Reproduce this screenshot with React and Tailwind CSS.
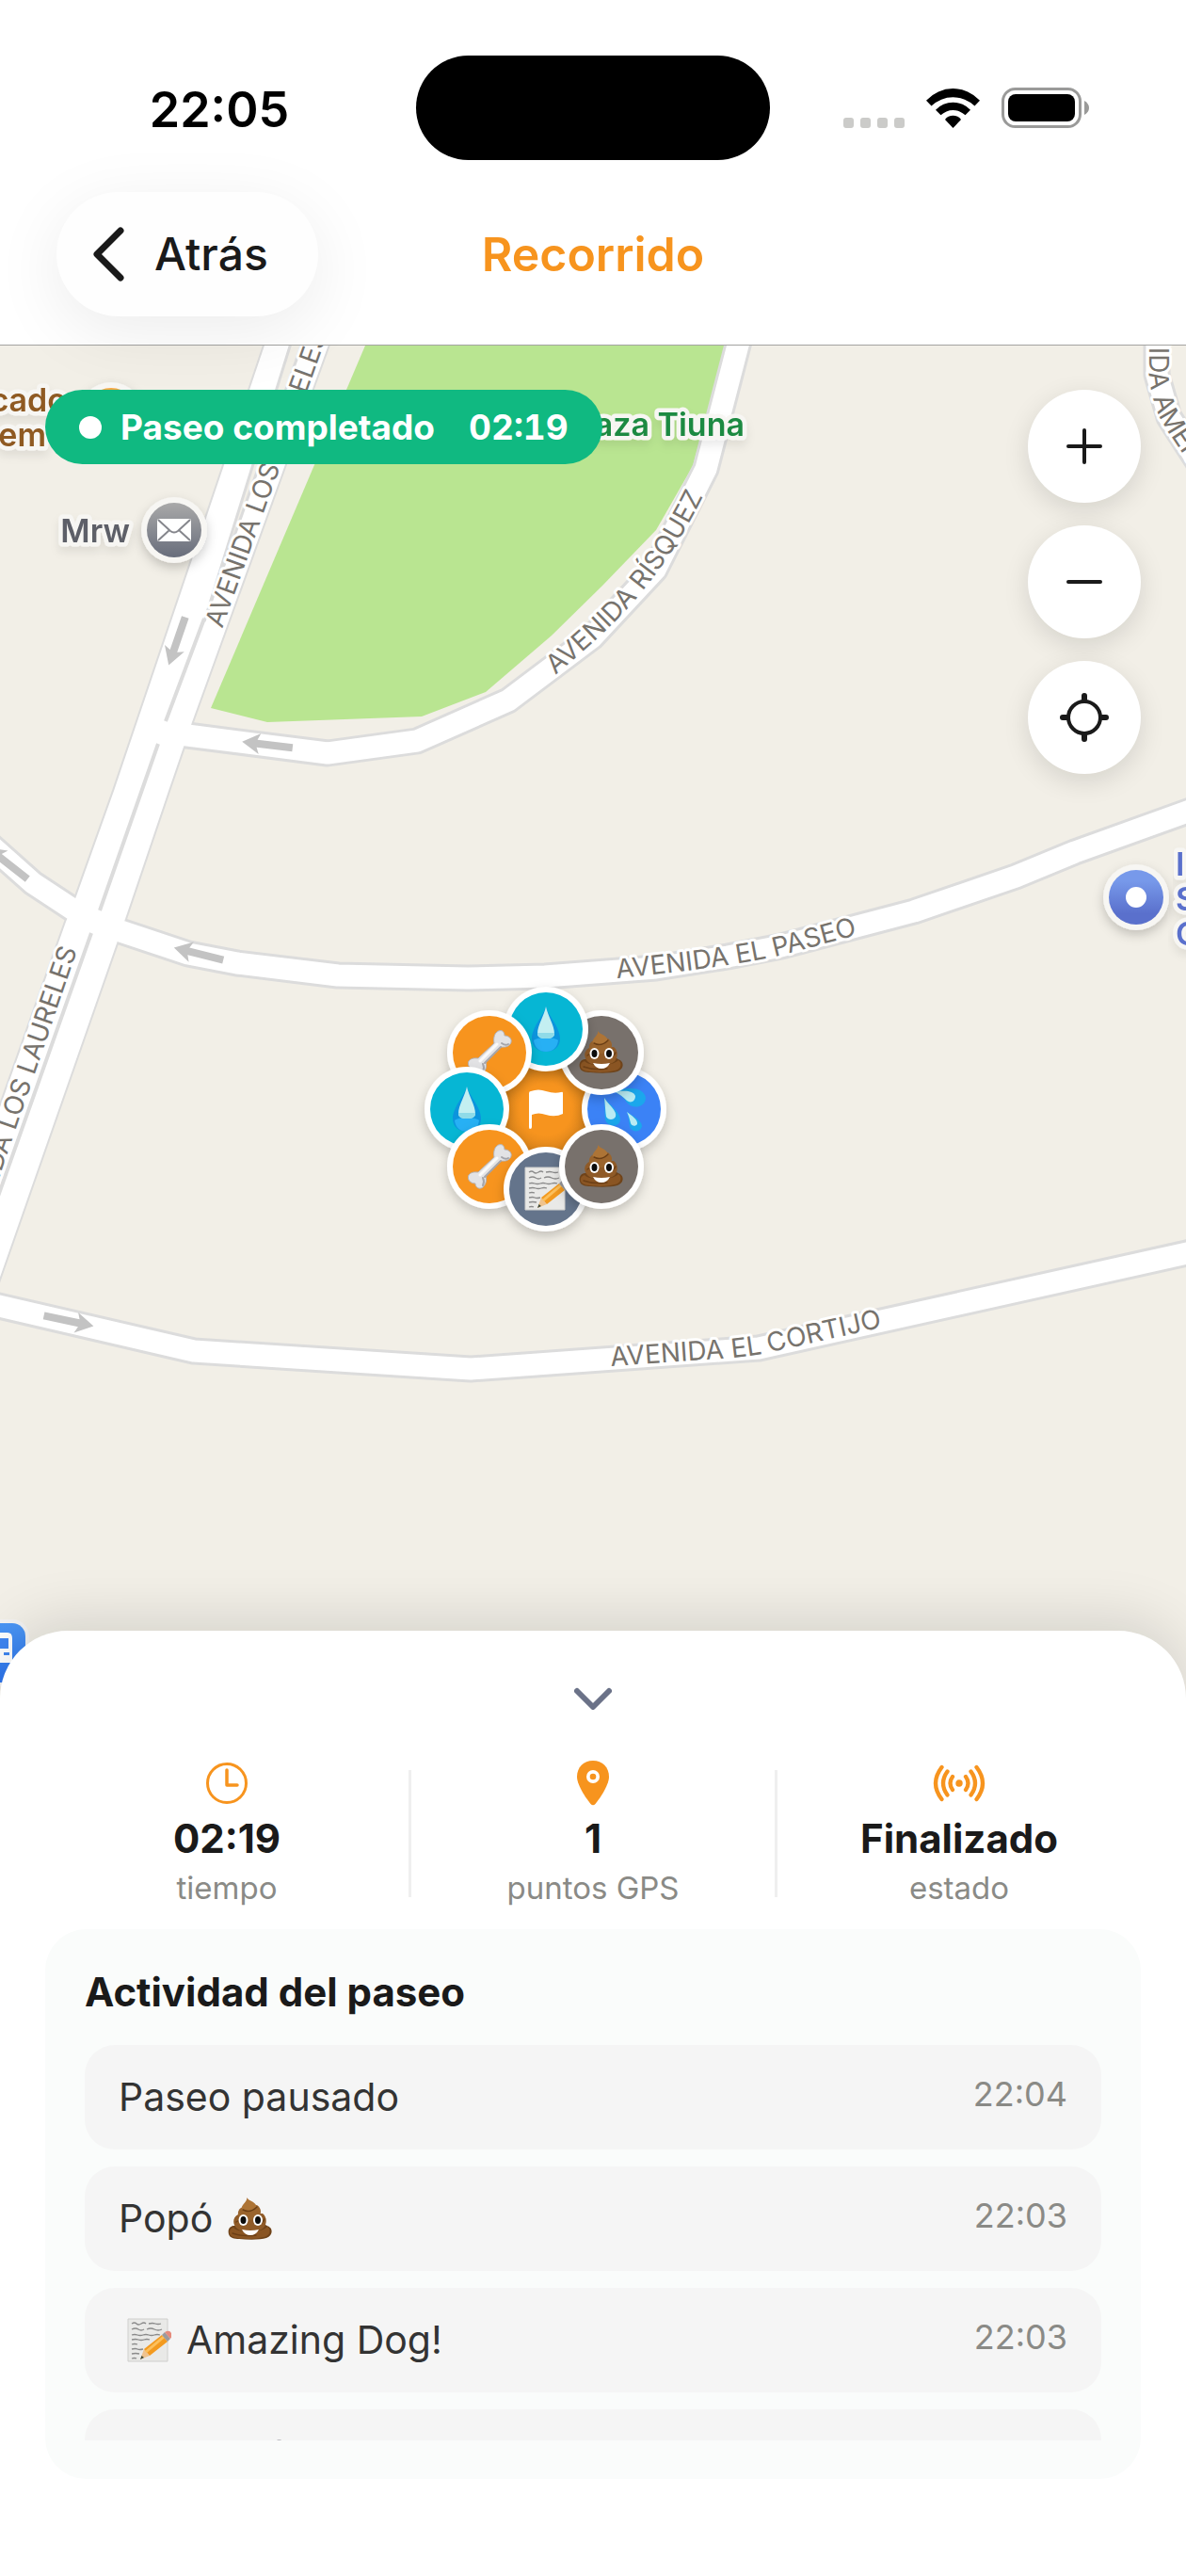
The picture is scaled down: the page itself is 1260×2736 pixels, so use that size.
import React from "react";

const STATS = [
  { icon: "clock", value: "02:19", label: "tiempo" },
  { icon: "pin", value: "1", label: "puntos GPS" },
  { icon: "radio", value: "Finalizado", label: "estado" },
];

const EVENTS = [
  { id: 1, text: "Paseo pausado", time: "22:04" },
  { id: 2, text: "Popó", after: "poop", time: "22:03" },
  { id: 3, text: "Amazing Dog!", before: "memo", time: "22:03" },
  { id: 4, text: "Snack", after: "bone", time: "22:03" },
];

const MARKERS = [
  { x: 663, y: 1178, color: "#3b82f6", glyph: "splash" },
  { x: 639, y: 1118, color: "#78716c", glyph: "poop" },
  { x: 580, y: 1093, color: "#06b6d4", glyph: "drop" },
  { x: 520, y: 1118, color: "#f7941e", glyph: "bone" },
  { x: 496, y: 1178, color: "#06b6d4", glyph: "drop" },
  { x: 520, y: 1239, color: "#f7941e", glyph: "bone" },
  { x: 580, y: 1263, color: "#64748b", glyph: "memo" },
  { x: 639, y: 1239, color: "#78716c", glyph: "poop" },
];

const ROADS = [
  "M150 775 L199 781 L348 800 L443 787 L540 744 L629 677 L696 605 L750 498 L787 355",
  "M-10 898 L35 938 L76 965 L128 989 L200 1013 L252 1023 L359 1036 L497 1039 L579 1037 L697 1028 L773 1016 L830 1005 L971 968 L1079 931 L1142 905 L1270 859",
  "M-10 1385 L206 1435 L500 1454 L806 1432 L1270 1329",
  "M1229 355 L1229 398 L1242 443 L1275 494",
];

const AVENUE =
  "M285 355 L121 840 L81 952 L70 979 L-10 1204 L-10 1385 L124 1002 L133 976 L179 840 L204 767 L353 355 Z";

const STREET_LABELS = [
  { id: "laureles-n", d: "M236 668 L348 355 L378 270", text: "AVENIDA LOS LAURELES" },
  { id: "laureles-s", d: "M-68 1447 L82 1009", text: "AVENIDA LOS LAURELES", end: true },
  { id: "risquez", d: "M590 717 C645 670 702 625 756 508", text: "AVENIDA RÍSQUEZ" },
  { id: "paseo", d: "M655 1039 Q780 1027 832 1014 L960 980", text: "AVENIDA EL PASEO" },
  { id: "cortijo", d: "M649 1451 L780 1442 Q815 1438 828 1434 L990 1398", text: "AVENIDA EL CORTIJO" },
  { id: "america", d: "M1221 294 L1221 400 Q1225 435 1240 457 L1290 532", text: "AVENIDA AMÉRICA" },
];

const ARROWS = [
  { x: 188, y: 681, a: 109 },
  { x: 284, y: 791, a: 187 },
  { x: 8, y: 917, a: 218 },
  { x: 211, y: 1013, a: 194 },
  { x: 73, y: 1403, a: 12 },
];

function Glyph({ name, ...rest }) {
  return (
    <svg viewBox="0 0 48 48" aria-hidden="true" {...rest}>
      {name === "poop" && (
        <>
          <path d="M6 31 C1 32 0 36 1 40 C2 44 7 45 12 45 C22 46 35 46 41 44 C47 42 48 36 45 33 C43 31 41 31 40 30 Z" fill="#6f4319" />
          <path d="M6 33 C11 39 36 39 42 32 C47 36 44 42 38 43 C28 46 12 45 6 43 C0 41 1 34 6 33Z" fill="#8a5523" />
          <path d="M11 19 C5 22 5 29 9 33 C14 39 35 39 39 32 C42 27 41 21 37 18 Z" fill="#8f5a27" />
          <path d="M14 12 C10 15 10 20 13 23 C20 27 31 25 34 20 C36 16 35 12 31 9 Z" fill="#9a642d" />
          <path d="M20 1 C21 4 18 6 16 9 C13 13 15 16 20 16 C27 17 31 13 30 9 C28 5 23 5 20 1Z" fill="#ad7436" />
          <path d="M16 14 Q24 18 31 11 M9 27 Q12 25 14 26 M35 28 Q38 27 39 24 M5 39 Q16 43 30 41" fill="none" stroke="#6b3f16" strokeWidth="1.4" strokeLinecap="round" />
          <ellipse cx="16.500" cy="25" rx="5" ry="6" fill="#fff" />
          <ellipse cx="32" cy="25" rx="5" ry="6" fill="#fff" />
          <ellipse cx="16.500" cy="25" rx="3" ry="4" fill="#0b0b0b" />
          <ellipse cx="32" cy="25" rx="3" ry="4" fill="#0b0b0b" />
          <path d="M15 35 Q24 37 33 35 Q30 41 24 41 Q18 41 15 35Z" fill="#fff" />
        </>
      )}
      {name === "drop" && (
        <>
          <path d="M24 0 C22 9 9 22 9 34 C9 43 16 48 24 48 C32 48 39 43 39 34 C39 22 26 9 24 0Z" fill="#0c94dd" />
          <path d="M11 36 C15 32 33 32 37 36 C36 44 31 48 24 48 C17 48 12 44 11 36Z" fill="#27b0f4" />
          <path d="M24 0 C22 10 15 20 15 29 C15 33 19 34 24 34 C29 34 33 33 33 29 C33 20 26 10 24 0Z" fill="#c3eff1" />
          <path d="M15 28 H33 C33 33 29 34 24 34 C19 34 15 33 15 28Z" fill="#8fdbe8" />
        </>
      )}
      {name === "splash" && (
        <>
          <path d="M15 6 C26 0 45 0 47 12 C47 22 33 25 27 17 C24 12 20 9 15 6Z" fill="#1ba7ec" />
          <path d="M15 6 C23 4 34 4 36 10 C36 16 31 18 27 15 C23 11 19 8 15 6Z" fill="#b9ebf3" />
          <path d="M3 12 C9 20 21 28 20 36 C18 44 6 43 4 35 C3 28 4 20 3 12Z" fill="#1ba7ec" />
          <path d="M3 12 C8 20 17 26 15 32 C13 36 7 36 5 32 C4 26 4 20 3 12Z" fill="#b9ebf3" />
          <path d="M27 27 C33 31 43 36 43 42 C42 49 32 49 30 43 C29 38 29 32 27 27Z" fill="#1ba7ec" />
          <path d="M27 27 C32 31 39 35 38 40 C36 43 32 42 31 39 C30 35 29 31 27 27Z" fill="#b9ebf3" />
        </>
      )}
      {name === "bone" && (
        <>
          <path
            d="M32 2 C36 -1 40 1 40 6 C46 6 49 11 46 15 C43 19 38 18 36 18 L20 34 C21 37 21 42 17 46 C13 49 9 46 9 42 C3 42 0 37 2 33 C5 29 10 30 12 30 L29 14 C28 10 29 4 32 2Z"
            fill="#e3e3e5"
            stroke="#b3b3b8"
            strokeWidth="1"
          />
          <path d="M14 33 L32 15" stroke="#fafafa" strokeWidth="3" strokeLinecap="round" />
          <path d="M19 35 L36 18 M17 44 Q19 40 17 36 M44 15 Q41 17 37 14" stroke="#a5a5aa" strokeWidth="2" strokeLinecap="round" fill="none" />
        </>
      )}
      {name === "memo" && (
        <>
          <path d="M2 1 H44 V46 H2 Z" fill="#e9e9e7" stroke="#cfcfcd" strokeWidth="1" />
          <path
            d="M6 6 q3 -2 5 0 t5 0 t5 0 M24 6 q4 -1 7 0 t6 0 M6 12 q4 -2 7 0 t6 0 M22 12 q4 -2 8 0 t8 0 M6 18 q3 -1 6 0 t6 0 t6 0 t6 0 t6 0 M6 23 q4 -1 7 0 t6 0 t6 0 M6 28 q3 -1 6 0 M6 33 q4 -1 6 0 t6 0 M6 38 q4 -1 8 0 M6 43 q3 -1 5 0"
            fill="none"
            stroke="#8b8b8b"
            strokeWidth="1.3"
          />
          <path d="M15 44 L19 33 L25 40 Z" fill="#efc38e" />
          <path d="M15 44 L16.500 40 L19 42 Z" fill="#3d4a3a" />
          <path d="M19 33 L38 18 L44 25 L25 40 Z" fill="#f39a1f" />
          <path d="M20 35 L39 19 L41 21 L22 37 Z" fill="#fcc05c" />
          <path d="M38 18 L41 15 L47 22 L44 25 Z" fill="#9a9a9d" />
          <path d="M41 15 Q46 12 48 16 Q49 20 47 22 Z" fill="#e58b7c" />
        </>
      )}
    </svg>
  );
}

function StatIcon({ name }) {
  if (name === "clock") {
    return (
      <svg className="size-12" viewBox="-24 -24 48 48" fill="none" stroke="#f7941e" strokeLinecap="round" strokeLinejoin="round" aria-hidden="true">
        <circle r="20.500" strokeWidth="3" />
        <path d="M0 -14 V2 H11" strokeWidth="3.500" />
      </svg>
    );
  }
  if (name === "pin") {
    return (
      <svg className="size-12" viewBox="-7 0 48 48" aria-hidden="true">
        <path d="M17 0 C27 0 34 7 34 17 C34 27 22 43 19.500 46 Q17 48.500 14.500 46 C12 43 0 27 0 17 C0 7 7 0 17 0Z" fill="#f7941e" />
        <circle cx="17" cy="17" r="7" fill="#fff" />
        <circle cx="17" cy="17" r="3.300" fill="#f7941e" />
      </svg>
    );
  }
  return (
    <svg className="h-12 w-14" viewBox="-28 -24 56 48" fill="none" stroke="#f7941e" strokeWidth="4.300" strokeLinecap="round" aria-hidden="true">
      <circle r="3.700" fill="#f7941e" stroke="none" />
      <path d="M-7 -7 Q-12 0 -7 7 M7 -7 Q12 0 7 7" />
      <path d="M-12.500 -12.500 Q-21.500 0 -12.500 12.500 M12.500 -12.500 Q21.500 0 12.500 12.500" />
      <path d="M-18.500 -17 Q-31.500 0 -18.500 17 M18.500 -17 Q31.500 0 18.500 17" />
    </svg>
  );
}

function PlaceName({ x, y, color, anchor = "start", children }) {
  return (
    <text
      x={x}
      y={y}
      textAnchor={anchor}
      fill={color}
      stroke="#f7f6f3"
      strokeWidth="9"
      strokeLinejoin="round"
      paintOrder="stroke"
      className="text-[34px] font-semibold"
      filter="url(#label-shadow)"
    >
      {children}
    </text>
  );
}

function StreetMap() {
  return (
    <svg className="absolute inset-0 h-full w-full" viewBox="0 367 1260 1437" preserveAspectRatio="xMinYMin slice" role="img" aria-label="Mapa del recorrido">
      <defs>
        <linearGradient id="mail" x1="0" y1="0" x2="0" y2="1">
          <stop offset="0" stopColor="#a9a9a9" />
          <stop offset="1" stopColor="#686d7b" />
        </linearGradient>
        <linearGradient id="poi" x1="0" y1="0" x2="0" y2="1">
          <stop offset="0.200" stopColor="#7799ea" />
          <stop offset="0.800" stopColor="#5a70cc" />
        </linearGradient>
        <linearGradient id="bus" x1="0" y1="0" x2="0" y2="1">
          <stop offset="0" stopColor="#4b96f5" />
          <stop offset="1" stopColor="#2c74ee" />
        </linearGradient>
        <radialGradient id="goal">
          <stop offset="0.550" stopColor="#f7941e" />
          <stop offset="0.900" stopColor="#de861b" />
        </radialGradient>
        <filter id="label-shadow" x="-30%" y="-50%" width="160%" height="220%">
          <feDropShadow dx="0" dy="6" stdDeviation="5" floodColor="#000" floodOpacity="0.08" />
        </filter>
        <filter id="pin-shadow" x="-40%" y="-40%" width="180%" height="180%">
          <feDropShadow dx="0" dy="5" stdDeviation="6" floodColor="#000" floodOpacity="0.2" />
        </filter>
        {STREET_LABELS.map((s) => (
          <path key={s.id} id={s.id} d={s.d} />
        ))}
      </defs>

      <rect x="0" y="367" width="1260" height="1437" fill="#f2efe7" />
      <path d="M388 367 L224 752 L284 767 L448 761 L516 735 L586 675 L640 622 L697 563 L736 495 L771 367 Z" fill="#b9e591" />

      <g fill="none" stroke="#dcdcdc" strokeWidth="29" strokeLinejoin="round">
        {ROADS.map((d) => (
          <path key={d} d={d} />
        ))}
      </g>
      <path d={AVENUE} fill="none" stroke="#dcdcdc" strokeWidth="4" />
      <path d={AVENUE} fill="#fff" />
      <g fill="none" stroke="#fff" strokeWidth="23" strokeLinejoin="round">
        {ROADS.map((d) => (
          <path key={d} d={d} />
        ))}
      </g>
      <path d="M312 355 L322 362 L217 660 Z" fill="#f2efe7" stroke="#dcdcdc" strokeWidth="3" />
      <path d="M217 657 L176 766 M168 790 L106 967 M97 991 L-4 1276" fill="none" stroke="#dcdcdc" strokeWidth="4" />

      <g fill="#c3c3c3">
        {ARROWS.map((a) => (
          <path key={a.x} transform={`translate(${a.x} ${a.y}) rotate(${a.a})`} d="M-27 -4 H11 L8 -11 L27 0 L8 11 L11 4 H-27 Z" />
        ))}
      </g>

      <g className="text-[28px]" fill="#77736d" stroke="#fff" strokeWidth="6" strokeLinejoin="round" paintOrder="stroke">
        {STREET_LABELS.map((s) => (
          <text key={s.id} textAnchor={s.end ? "end" : "start"}>
            <textPath href={`#${s.id}`} startOffset={s.end ? "100%" : "0"}>
              {s.text}
            </textPath>
          </text>
        ))}
      </g>

      <g filter="url(#pin-shadow)">
        <circle cx="118" cy="441" r="35" fill="#f7f6f3" />
      </g>
      <circle cx="118" cy="441" r="29" fill="#f5a843" />
      <PlaceName x="71" y="437" color="#8f5a24" anchor="end">cado</PlaceName>
      <PlaceName x="49" y="474" color="#8f5a24" anchor="end">em</PlaceName>
      <PlaceName x="791" y="463" color="#1f8a43" anchor="end">Plaza Tiuna</PlaceName>
      <PlaceName x="138" y="576" color="#5d5f67" anchor="end">Mrw</PlaceName>

      <g filter="url(#pin-shadow)">
        <circle cx="185" cy="563" r="35" fill="#f7f6f3" />
      </g>
      <circle cx="185" cy="563" r="29" fill="url(#mail)" />
      <rect x="167" y="551" width="36" height="24" rx="2" fill="#fff" />
      <path d="M168 552 L181 564 Q185 567 189 564 L202 552 M168 574 L180 563 M202 574 L190 563" fill="none" stroke="#85868c" strokeWidth="2" />

      <g filter="url(#pin-shadow)">
        <circle cx="1207" cy="953" r="35" fill="#f7f6f3" />
      </g>
      <circle cx="1207" cy="953" r="29" fill="url(#poi)" />
      <circle cx="1207" cy="953" r="11" fill="#fff" />
      <PlaceName x="1249" y="930" color="#5a70cc">I</PlaceName>
      <PlaceName x="1249" y="967" color="#5a70cc">S</PlaceName>
      <PlaceName x="1249" y="1004" color="#5a70cc">C</PlaceName>

      <rect x="-40" y="1720" width="71" height="71" rx="18" fill="#f3f3f3" />
      <rect x="-36" y="1724" width="63" height="63" rx="14" fill="url(#bus)" />
      <path d="M-20 1734 H8 Q13 1734 13 1740 V1766 H-20 Z" fill="#fff" />
      <path d="M-16 1740 H9 V1751 H-16 Z" fill="#3f86f2" />
      <rect x="4" y="1755" width="6" height="3" fill="#3f86f2" />

      <circle cx="580" cy="1178" r="50" fill="url(#goal)" />
      <path d="M562 1161 Q562 1159 564 1159 Q572 1156 580 1159 Q589 1162 596 1160 Q598 1159 598 1161 V1183 Q590 1187 580 1184 Q572 1181 565 1184 V1197 Q565 1199 563 1199 Q562 1199 562 1197 Z" fill="#fff" />
      {MARKERS.map((m) => (
        <g key={`${m.x}-${m.y}`}>
          <circle cx={m.x} cy={m.y} r="45" fill="#fff" filter="url(#pin-shadow)" />
          <circle cx={m.x} cy={m.y} r="39" fill={m.color} />
          <Glyph name={m.glyph} x={m.x - 24} y={m.y - 24} width="48" height="48" />
        </g>
      ))}
    </svg>
  );
}

function StatusBar() {
  return (
    <div className="grid grid-cols-[1fr_376px_1fr] items-center">
      <time className="pt-1 pl-6 text-center text-[52px] leading-none font-semibold text-black">22:05</time>
      <div className="h-[111px] rounded-full bg-black" />
      <div className="flex items-end justify-center gap-[23px] pr-6">
        <div className="flex gap-[7px]">
          <span className="size-[11px] rounded-[3px] bg-[#cbcbc9]" />
          <span className="size-[11px] rounded-[3px] bg-[#cbcbc9]" />
          <span className="size-[11px] rounded-[3px] bg-[#cbcbc9]" />
          <span className="size-[11px] rounded-[3px] bg-[#cbcbc9]" />
        </div>
        <svg className="h-[42px] w-[57px]" viewBox="0 0 57 42" aria-hidden="true">
          <path d="M0 12.700 A38.500 38.500 0 0 1 57 12.700 L51.500 18.600 A33 33 0 0 0 5.500 18.600 Z" />
          <path d="M10 22.700 A25.400 25.400 0 0 1 47 22.700 L41.500 28.300 A18.600 18.600 0 0 0 15.500 28.300 Z" />
          <path d="M20 33 A10.500 10.500 0 0 1 37 33 L28.500 42 Z" />
        </svg>
        <svg className="h-[43px] w-[94px]" viewBox="0 0 94 43" aria-hidden="true">
          <rect x="1.500" y="1.500" width="82" height="40" rx="13" fill="none" stroke="#9a9a99" strokeWidth="3" />
          <rect x="7" y="7" width="71" height="29" rx="8" fill="#000" />
          <path d="M88 14 Q93 17 93 21.500 Q93 26 88 29 Z" fill="#9a9a99" />
        </svg>
      </div>
    </div>
  );
}

export default function App() {
  return (
    <div className="flex min-h-screen flex-col overflow-hidden bg-white font-['Inter',sans-serif] text-[#1a1a1a]">
      <header className="relative z-10 border-b border-[#a3a3a1] bg-white pt-[59px] pb-[30px]">
        <StatusBar />
        <nav className="mt-[34px] grid grid-cols-[1fr_auto_1fr] items-center px-[60px]">
          <button
            type="button"
            className="flex h-[132px] w-[278px] items-center gap-8 rounded-full bg-[#fefefe] pl-[38px] text-[48px] font-medium shadow-[0_16px_72px_rgba(0,0,0,0.08)]"
          >
            <svg className="h-[58px] w-[34px]" viewBox="0 0 34 58" fill="none" stroke="currentColor" strokeWidth="7" strokeLinecap="round" strokeLinejoin="round" aria-hidden="true">
              <path d="M30 4 L5 29 L30 54" />
            </svg>
            Atrás
          </button>
          <h1 className="text-[50px] leading-none font-semibold text-[#f7941e]">Recorrido</h1>
        </nav>
      </header>

      <main className="relative min-h-[1200px] flex-1">
        <StreetMap />
        <div className="absolute inset-x-12 top-[47px] flex items-start justify-between">
          <div className="flex h-[79px] items-center rounded-full bg-[#10b981] px-9 text-[37px] font-bold text-white">
            <span className="mr-5 size-6 rounded-full bg-white" />
            <span className="mr-9">Paseo completado</span>
            <time className="tabular-nums">02:19</time>
          </div>
          <div className="flex flex-col gap-6">
            <button type="button" aria-label="Acercar" className="flex size-[120px] items-center justify-center rounded-full bg-white shadow-[0_8px_28px_rgba(0,0,0,0.12)]">
              <svg className="size-12" viewBox="-24 -24 48 48" stroke="currentColor" strokeWidth="4" strokeLinecap="round" aria-hidden="true">
                <path d="M-17 0 H17 M0 -17 V17" />
              </svg>
            </button>
            <button type="button" aria-label="Alejar" className="flex size-[120px] items-center justify-center rounded-full bg-white shadow-[0_8px_28px_rgba(0,0,0,0.12)]">
              <svg className="size-12" viewBox="-24 -24 48 48" stroke="currentColor" strokeWidth="4" strokeLinecap="round" aria-hidden="true">
                <path d="M-17 0 H17" />
              </svg>
            </button>
            <button type="button" aria-label="Centrar" className="flex size-[120px] items-center justify-center rounded-full bg-white shadow-[0_8px_28px_rgba(0,0,0,0.12)]">
              <svg className="size-14" viewBox="-28 -28 56 56" fill="none" stroke="currentColor" strokeLinecap="round" aria-hidden="true">
                <circle r="17" strokeWidth="4" />
                <path d="M0 -23 V-19 M0 23 V19 M-23 0 H-19 M23 0 H19" strokeWidth="6" />
              </svg>
            </button>
          </div>
        </div>
      </main>

      <section className="relative z-10 -mt-[72px] rounded-t-[72px] bg-white px-12 pt-6 pb-[103px] shadow-[0_-12px_60px_rgba(0,0,0,0.12)]">
        <button type="button" aria-label="Contraer panel" className="flex h-24 w-full items-center justify-center text-[#6b7288]">
          <svg className="h-6 w-10" viewBox="0 0 40 24" fill="none" stroke="currentColor" strokeWidth="6" strokeLinecap="round" strokeLinejoin="round" aria-hidden="true">
            <path d="M3 4 L20 21 L37 4" />
          </svg>
        </button>

        <dl className="mt-[18px] flex items-center">
          {STATS.map((s, i) => (
            <React.Fragment key={s.label}>
              {i > 0 && <div className="h-[135px] w-[3px] bg-[#efefef]" />}
              <div className="flex flex-1 basis-0 flex-col items-center">
                <StatIcon name={s.icon} />
                <dd className="mt-[10px] text-[42px] leading-[50px] font-bold">{s.value}</dd>
                <dt className="mt-[7px] text-[33px] leading-10 text-[#8a8a86]">{s.label}</dt>
              </div>
            </React.Fragment>
          ))}
        </dl>

        <div className="mt-6 rounded-[44px] bg-[#fafcfb] px-[42px] pt-[42px] pb-[41px]">
          <h2 className="text-[42px] leading-[50px] font-bold">Actividad del paseo</h2>
          <ul className="mt-[31px] flex h-[420px] flex-col gap-[18px] overflow-hidden">
            {EVENTS.map((e) => (
              <li key={e.id} className="flex shrink-0 items-start justify-between rounded-[32px] bg-[#f5f5f5] px-9 py-[30px]">
                <span className="flex items-center text-[41px] leading-[51px] text-[#333]">
                  {e.before && <Glyph name={e.before} className="mr-4 ml-2 size-12" />}
                  {e.text}
                  {e.after && <Glyph name={e.after} className="ml-4 size-12" />}
                </span>
                <time className="text-[36px] leading-[45px] text-[#8a8a86]">{e.time}</time>
              </li>
            ))}
          </ul>
        </div>
      </section>
    </div>
  );
}
